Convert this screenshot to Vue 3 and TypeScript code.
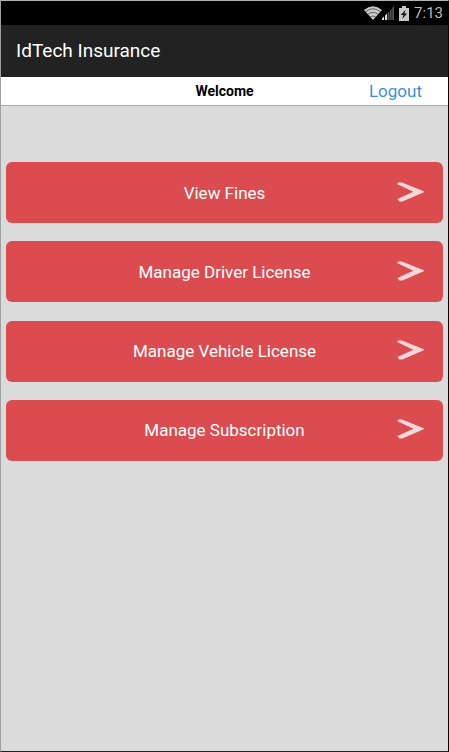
<script setup lang="ts">
const actions: string[] = [
  'View Fines',
  'Manage Driver License',
  'Manage Vehicle License',
  'Manage Subscription',
]
</script>

<template>
  <div class="screen">
    <div class="status">
      <svg class="wifi" viewBox="0 0 18 14" width="18" height="14" aria-hidden="true">
        <path d="M0 4 Q9 -3.4 18 4 L9 14 Z" fill="#c8c8c8" />
        <path d="M1.5 5.8 Q9 -.2 16.5 5.8 M3.8 8.4 Q9 4.2 14.2 8.4 M6.2 11 Q9 8.8 11.8 11" fill="none" stroke="#333" stroke-width=".7" />
      </svg>
      <svg class="signal" viewBox="0 0 12 14" width="12" height="14" aria-hidden="true">
        <path d="M0 14 V12.5 L2 10.5 V14 Z M3 14 V9.5 L5 7.5 V14 Z" fill="#d8d8d8" />
        <path d="M5.5 14 V7 L7.5 5 V14 Z M8 14 V4.5 L9.7 2.8 V14 Z M10.2 14 V2 L12 0 V14 Z" fill="#505050" />
      </svg>
      <svg class="battery" viewBox="0 0 10 15" width="10" height="15" aria-hidden="true">
        <path d="M3 0 H7 V2 H10 V15 H0 V2 H3 Z" fill="#c8c8c8" />
        <path d="M6.6 3.8 L1.8 9 H4.6 L3.2 13 L8.2 7.6 H5.4 Z" fill="#111" />
      </svg>
      <time class="clock">7:13</time>
    </div>
    <header class="appbar">
      <h1>IdTech Insurance</h1>
    </header>
    <div class="welcome">
      <strong>Welcome</strong>
      <a class="logout" href="#">Logout</a>
    </div>
    <main class="actions">
      <button v-for="label in actions" :key="label" type="button" class="action">
        <span>{{ label }}</span>
        <svg class="arrow" viewBox="0 0 27 22" width="27" height="22" aria-hidden="true">
          <path d="M0 2 L1.4 0.5 L5 0.5 L26.8 9.2 L26.8 10.2 L5.4 19.4 L2.4 19.4 L0.4 17 L16.4 9.8 Z" fill="#f8d7da" />
        </svg>
      </button>
    </main>
  </div>
</template>

<style>
body {
  margin: 0;
}
</style>

<style scoped>
.screen {
  box-sizing: border-box;
  min-height: 100vh;
  border: 1px solid #a0a0a0;
  border-top-color: #b0b4b2;
  border-right-color: #000;
  border-bottom-color: #222;
  background: #dbdbdb;
  font-family: Roboto, "Liberation Sans", sans-serif;
}

.status {
  display: flex;
  align-items: center;
  justify-content: flex-end;
  height: 24px;
  padding-right: 5px;
  background: #000;
}

.battery {
  margin: 0 5px;
}

.clock {
  color: #bcbcbc;
  font-size: 15px;
  line-height: 24px;
}

.appbar {
  display: flex;
  align-items: center;
  height: 52px;
  padding: 0 15px;
  background: #222;
}

h1 {
  margin: 0;
  color: #fff;
  font-size: 19px;
  font-weight: 400;
  line-height: 24px;
}

.welcome {
  display: grid;
  grid-template-columns: 1fr auto 1fr;
  align-items: center;
  height: 28px;
  padding: 0 26px;
  border-bottom: 1px solid #aaa;
  background: #fff;
}

.welcome strong {
  grid-column: 2;
  color: #000;
  font-size: 14px;
  line-height: 20px;
}

.logout {
  justify-self: end;
  color: #3d8fdb;
  font-size: 17px;
  line-height: 20px;
  text-decoration: none;
}

.actions {
  display: grid;
  align-content: space-between;
  min-height: 299px;
  padding: 56px 5px;
}

.action {
  display: grid;
  grid-template-columns: 1fr auto 1fr;
  align-items: center;
  height: 61px;
  padding: 0 19px;
  border: 0;
  border-radius: 6px;
  background: #da4c4f;
  color: #fff;
  font: inherit;
  font-size: 17px;
  line-height: 20px;
  cursor: pointer;
}

.action span {
  grid-column: 2;
}

.arrow {
  justify-self: end;
}
</style>
